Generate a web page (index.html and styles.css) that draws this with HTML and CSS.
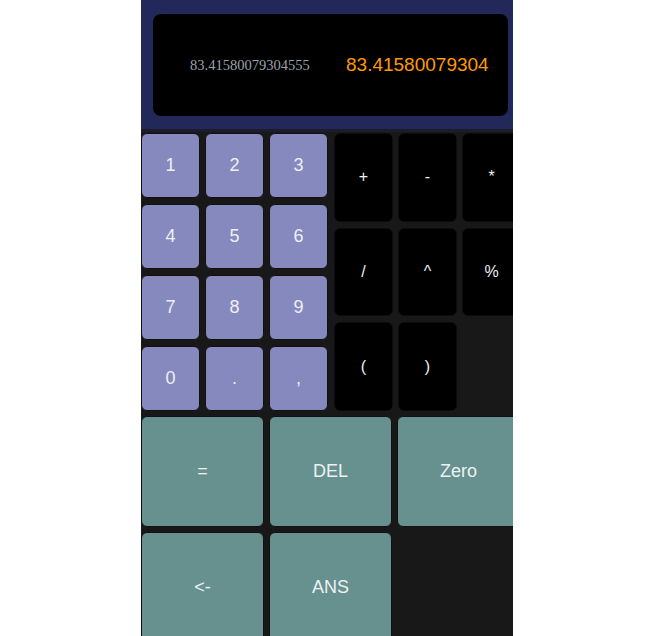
FILE: index.html
```html
<!DOCTYPE html>
<html lang="en">
<head>
    <meta charset="UTF-8">
    <meta name="viewport" content="width=device-width, initial-scale=1.0">
    <title>Calculator</title>
    <link rel="stylesheet" href="styles.css">
</head>
<body>
    <div class="calculator">
        <div class="inner">
            <div class="screen">
                <div class="display">
                    <div class="history">83.41580079304555</div>
                    <div class="result">83.41580079304555</div>
                </div>
            </div>
            <div class="keypad">
                <div class="keys">
                    <div class="numbers">
                        <button class="num">1</button>
                        <button class="num">2</button>
                        <button class="num">3</button>
                        <button class="num">4</button>
                        <button class="num">5</button>
                        <button class="num">6</button>
                        <button class="num">7</button>
                        <button class="num">8</button>
                        <button class="num">9</button>
                        <button class="num">0</button>
                        <button class="num">.</button>
                        <button class="num">,</button>
                    </div>
                    <div class="operators">
                        <button class="op">+</button>
                        <button class="op">-</button>
                        <button class="op">*</button>
                        <button class="op">/</button>
                        <button class="op">^</button>
                        <button class="op">%</button>
                        <button class="op">(</button>
                        <button class="op">)</button>
                    </div>
                </div>
                <div class="actions">
                    <button class="action">=</button>
                    <button class="action">DEL</button>
                    <button class="action">Zero</button>
                    <button class="action">&lt;-</button>
                    <button class="action">ANS</button>
                </div>
            </div>
        </div>
    </div>
</body>
</html>
```

FILE: styles.css
```css
body {
    margin: 0;
    padding: 0 0 0 2px;
    background: #fff;
    font-family: "Liberation Sans", Arial, sans-serif;
    display: flex;
    justify-content: center;
    height: 636px;
    overflow: hidden;
}
.calculator {
    width: 372px;
    height: 636px;
    overflow: hidden;
    background: #181818;
}
.inner {
    width: 379px;
}
.screen {
    background: #23285a;
    height: 132px;
    padding: 14px 12px 0;
    box-sizing: border-box;
    border-bottom: 3px solid #1c1c2c;
}
.display {
    background: #000;
    border-radius: 8px;
    height: 102px;
    display: flex;
    align-items: center;
    padding: 0 19px 0 37px;
    overflow: hidden;
}
.history {
    width: 156px;
    flex-shrink: 0;
    font-family: "Liberation Serif", serif;
    font-size: 14.5px;
    color: #9aa3ad;
}
.result {
    flex: 1;
    overflow: hidden;
    white-space: nowrap;
    font-size: 19px;
    color: #ff9a00;
}
.keypad {
    padding-top: 1px;
}
.keys {
    display: flex;
    gap: 5px;
    height: 278px;
}
.numbers {
    display: grid;
    grid-template-columns: repeat(3, 59px);
    grid-template-rows: repeat(4, 1fr);
    gap: 6px 5px;
}
.operators {
    display: grid;
    grid-template-columns: repeat(3, 59px);
    grid-template-rows: repeat(3, 1fr);
    gap: 6px 5px;
    margin-left: 1px;
}
.actions {
    display: grid;
    grid-template-columns: repeat(3, 123px);
    grid-template-rows: repeat(2, 111px);
    gap: 5px;
    margin-top: 5px;
}
button {
    border: 1px solid #111;
    border-radius: 6px;
    font-family: "Liberation Sans", Arial, sans-serif;
    font-size: 18px;
    color: #eef0f4;
    padding: 0;
    cursor: pointer;
}
.num {
    background: #8589bd;
}
.op {
    background: #000;
    border-color: #0c0c0c;
    font-size: 16px;
}
.action {
    background: #66918e;
}
```
